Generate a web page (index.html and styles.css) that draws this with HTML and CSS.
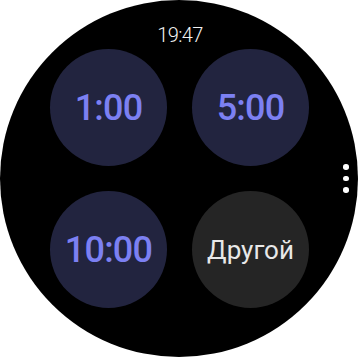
FILE: index.html
```html
<!DOCTYPE html>
<html>
<head>
<meta charset="utf-8">
<link rel="stylesheet" href="styles.css">
</head>
<body>
<div class="watch">
  <div class="time">19:47</div>
  <div class="grid">
    <div class="btn preset"><span>1:00</span></div>
    <div class="btn preset"><span>5:00</span></div>
    <div class="btn preset"><span>10:00</span></div>
    <div class="btn other"><span>Другой</span></div>
  </div>
  <div class="more">
    <i></i><i></i><i></i>
  </div>
</div>
</body>
</html>
```

FILE: styles.css
```css
html, body {
  margin: 0;
  padding: 0;
  background: #ffffff;
}
.watch {
  position: relative;
  width: 358px;
  height: 357px;
  border-radius: 50%;
  background: #000000;
  display: flex;
  flex-direction: column;
  align-items: center;
  font-family: Roboto, "Noto Sans", sans-serif;
}
.time {
  margin-top: 25px;
  height: 21px;
  line-height: 21px;
  font-size: 20px;
  font-weight: 300;
  color: #f2f2f2;
  letter-spacing: -0.6px;
  padding-left: 2px;
}
.grid {
  margin-top: 3px;
  padding-left: 1px;
  display: grid;
  grid-template-columns: 117px 117px;
  gap: 25px;
}
.btn {
  width: 117px;
  height: 117px;
  border-radius: 50%;
  display: flex;
  align-items: center;
  justify-content: center;
}
.preset {
  background: #22243f;
  color: #7c80f2;
  font-size: 36px;
  font-weight: 500;
  letter-spacing: -0.8px;
  line-height: 36px;
}
.other {
  background: #252525;
  color: #e8e8e8;
  font-size: 26px;
  font-weight: 400;
  line-height: 26px;
}
.more {
  position: absolute;
  left: 343px;
  top: 164px;
  display: flex;
  flex-direction: column;
  gap: 6px;
}
.more i {
  display: block;
  width: 5.5px;
  height: 5.5px;
  border-radius: 50%;
  background: #ffffff;
}
```
